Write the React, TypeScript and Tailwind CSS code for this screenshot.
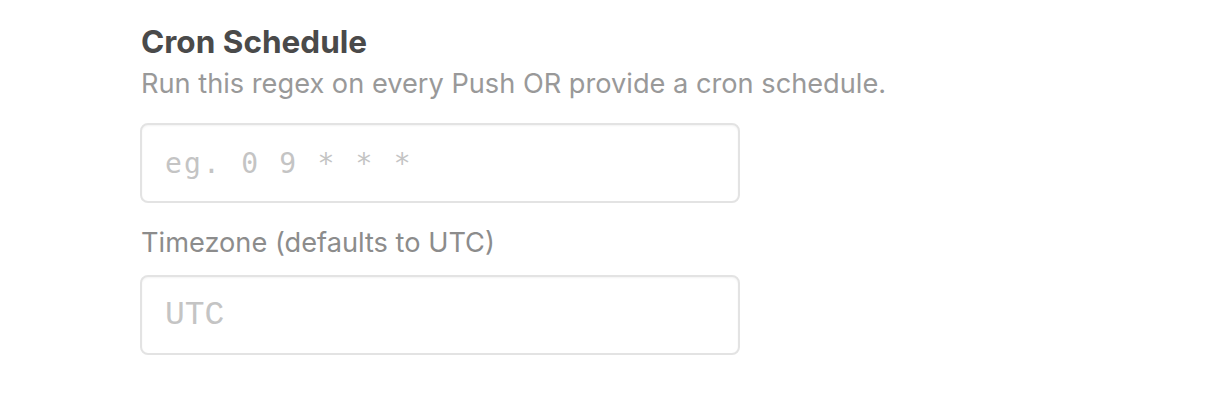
export default function App() {
  return (
    <div className="min-h-[416px] w-full bg-white font-['Inter',sans-serif]">
      <div className="pl-[141px] pt-[22px]">
        <h2 className="text-[31.5px] leading-[40px] font-bold text-[#4a4a4a]">Cron Schedule</h2>
        <p className="mt-[4px] whitespace-nowrap text-[27.2px] leading-[36px] text-[#999999]">
          Run this regex on every Push OR provide a cron schedule.
        </p>
        <input
          type="text"
          placeholder="eg. 0 9 * * *"
          className="mt-[21px] -ml-px block h-[80px] w-[600px] rounded-[8px] border-2 border-[#e3e3e3] bg-white px-[23px] font-['DejaVu_Sans_Mono',monospace] text-[28px] tracking-[2.2px] text-[#4a4a4a] placeholder:text-[#c4c4c4] shadow-[inset_0_1px_2px_rgba(0,0,0,0.05)] outline-none"
        />
        <label className="mt-[22px] block text-[27.2px] leading-[36px] text-[#8c8c8c]">
          Timezone (defaults to UTC)
        </label>
        <input
          type="text"
          placeholder="UTC"
          className="mt-[14px] -ml-px block h-[80px] w-[600px] rounded-[8px] border-2 border-[#e3e3e3] bg-white px-[23px] font-['Courier_New','Nimbus_Mono_PS','FreeMono','Liberation_Mono',monospace] text-[33px] text-[#4a4a4a] placeholder:text-[#c4c4c4] shadow-[inset_0_1px_2px_rgba(0,0,0,0.05)] outline-none"
        />
      </div>
    </div>
  );
}
